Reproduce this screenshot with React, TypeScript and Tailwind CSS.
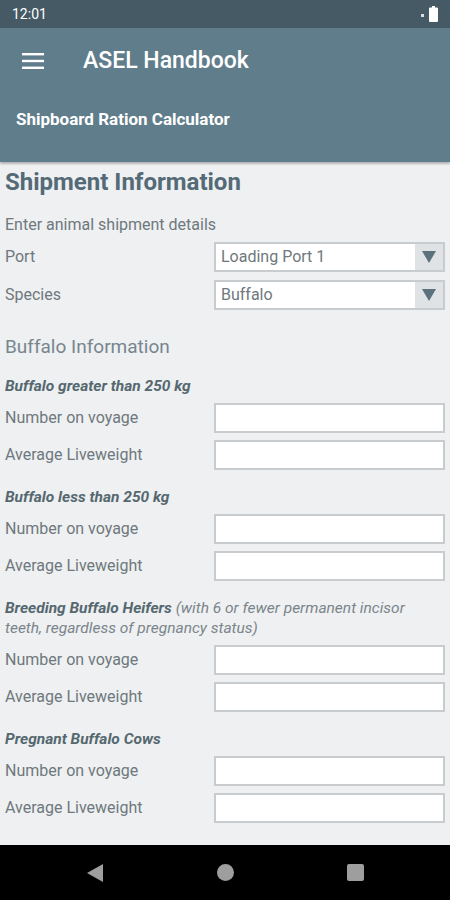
import React from 'react';

const groups = [
  { title: 'Buffalo greater than 250 kg' },
  { title: 'Buffalo less than 250 kg' },
  {
    title: 'Breeding Buffalo Heifers',
    note: ' (with 6 or fewer permanent incisor teeth, regardless of pregnancy status)',
  },
  { title: 'Pregnant Buffalo Cows' },
];

const font = { fontFamily: 'Roboto, "Noto Sans", sans-serif' };

const Field = ({ label }: { label: string }) => (
  <div className="flex items-center h-[30px]">
    <span className="w-[214px] pl-[5px] text-[16px] text-[#6f787d]">{label}</span>
    <div className="flex-1 h-[30px] mr-[5px] bg-white border-2 border-[#c8ccce]" />
  </div>
);

const Select = ({ label, value }: { label: string; value: string }) => (
  <div className="flex items-center h-[30px]">
    <span className="w-[214px] pl-[5px] text-[16px] text-[#6f787d]">{label}</span>
    <div className="flex-1 h-[30px] mr-[5px] bg-white border-2 border-[#c8ccce] flex items-center">
      <span className="flex-1 pl-[5px] text-[16px] text-[#6f787d]">{value}</span>
      <div className="w-[28px] h-full bg-[#dfe3e6] flex items-center justify-center">
        <svg width="14" height="12" viewBox="0 0 14 12">
          <path d="M0 0 H14 L7 12 Z" fill="#5b717d" />
        </svg>
      </div>
    </div>
  </div>
);

export default function App() {
  return (
    <div className="w-[450px] h-[900px] flex flex-col bg-[#eef0f2] overflow-hidden" style={font}>
      {/* status bar */}
      <div className="h-[28px] bg-[#455a64] flex items-center justify-between px-[12px] text-white text-[14px]">
        <span>12:01</span>
        <div className="flex items-end gap-[5px]">
          <span className="w-[3px] h-[3px] bg-white/80 mb-[5px]" />
          <svg width="9" height="16" viewBox="0 0 9 16">
            <path d="M3 0 H6 V1.5 H8 A1 1 0 0 1 9 2.5 V15 A1 1 0 0 1 8 16 H1 A1 1 0 0 1 0 15 V2.5 A1 1 0 0 1 1 1.5 H3 Z" fill="white" />
          </svg>
        </div>
      </div>

      {/* app bar */}
      <div className="h-[134px] bg-[#607d8b] shadow-[0_2px_2px_rgba(0,0,0,0.25)] flex flex-col">
        <div className="h-[66px] flex items-center">
          <svg className="ml-[22px]" width="22" height="16" viewBox="0 0 22 16">
            <rect y="0" width="22" height="2.4" fill="white" />
            <rect y="6.8" width="22" height="2.4" fill="white" />
            <rect y="13.6" width="22" height="2.4" fill="white" />
          </svg>
          <span className="ml-[39px] text-white text-[23px] font-medium">ASEL Handbook</span>
        </div>
        <div className="pl-[16px] pt-[13px] text-white text-[17px] font-bold">Shipboard Ration Calculator</div>
      </div>

      {/* content */}
      <div className="flex-1 flex flex-col">
        <h1 className="pl-[5px] mt-[5px] text-[24px] font-bold text-[#546a76] leading-[30px]">Shipment Information</h1>
        <p className="pl-[5px] mt-[18px] text-[16px] text-[#6f787d] leading-[20px]">Enter animal shipment details</p>
        <div className="mt-[7px] flex flex-col gap-[8px]">
          <Select label="Port" value="Loading Port 1" />
          <Select label="Species" value="Buffalo" />
        </div>
        <h2 className="pl-[5px] mt-[24px] text-[19px] text-[#78868e] leading-[26px]">Buffalo Information</h2>

        <div className="mt-[16px] flex flex-col gap-[17px]">
          {groups.map((g) => (
            <div key={g.title} className="flex flex-col gap-[7px]">
              <p className="pl-[5px] pr-[14px] text-[15.5px] italic leading-[20px] text-[#7b858a]">
                <span className="font-bold text-[#56686f]">{g.title}</span>
                {g.note}
              </p>
              <Field label="Number on voyage" />
              <Field label="Average Liveweight" />
            </div>
          ))}
        </div>
      </div>

      {/* nav bar */}
      <div className="h-[55px] bg-black flex items-center">
        <div className="w-[190px] flex justify-end pr-[87px]">
          <svg width="16" height="18" viewBox="0 0 16 18">
            <path d="M16 0 V18 L0 9 Z" fill="#9e9e9e" />
          </svg>
        </div>
        <div className="w-[70px] flex justify-center">
          <div className="w-[17px] h-[17px] rounded-full bg-[#9e9e9e]" />
        </div>
        <div className="flex-1 flex pl-[87px]">
          <div className="w-[17px] h-[17px] rounded-[2px] bg-[#9e9e9e]" />
        </div>
      </div>
    </div>
  );
}
